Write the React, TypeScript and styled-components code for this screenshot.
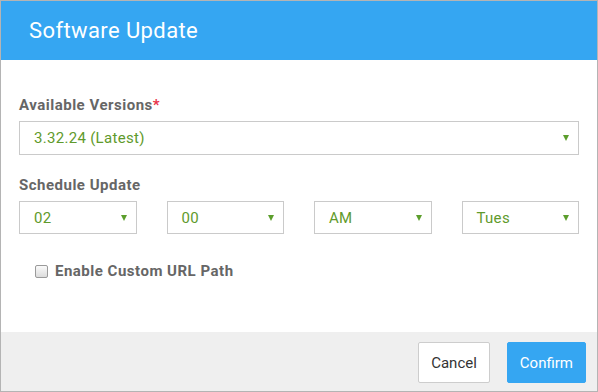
import styled, { createGlobalStyle } from "styled-components";

const GlobalStyle = createGlobalStyle`
  html, body {
    margin: 0;
    padding: 0;
    background: #fff;
  }
  body {
    font-family: Roboto, "Liberation Sans", Arial, sans-serif;
  }
`;

const Dialog = styled.div`
  width: 598px;
  height: 392px;
  box-sizing: border-box;
  border: 1px solid #b4b4b4;
  display: flex;
  flex-direction: column;
  background: #fff;
`;

const Header = styled.header`
  height: 59px;
  flex: none;
  background-color: #35a6f2;
  color: #fff;
  display: flex;
  align-items: center;
  padding-left: 28px;
  font-size: 22px;
  font-weight: 400;
  letter-spacing: 0.4px;
`;

const Body = styled.div`
  flex: 1;
  padding: 37px 18px 0 18px;
`;

const Label = styled.div`
  font-size: 15px;
  font-weight: 700;
  color: #666;
  line-height: 17px;
  margin-bottom: 7px;
  letter-spacing: 0.5px;
  .req {
    color: #e8344a;
  }
`;

const Field = styled.div`
  margin-bottom: 22px;
`;

const SelectBox = styled.div<{ $height?: number }>`
  height: ${({ $height }) => $height ?? 34}px;
  box-sizing: border-box;
  border: 1px solid #cacaca;
  display: flex;
  align-items: center;
  justify-content: space-between;
  padding: 0 9px 0 14px;
  font-size: 15px;
  color: #5f9a2c;
  letter-spacing: 0.3px;
`;

const Caret = styled.span`
  width: 0;
  height: 0;
  border-left: 3px solid transparent;
  border-right: 3px solid transparent;
  border-top: 6px solid #5c9e2c;
`;

const ScheduleRow = styled.div`
  display: grid;
  grid-template-columns: repeat(4, 1fr);
  column-gap: 30px;
`;

const CheckRow = styled.label`
  display: flex;
  align-items: center;
  gap: 7px;
  padding-left: 16px;
  margin-top: 28px;
  line-height: 18px;
  font-size: 15px;
  font-weight: 700;
  color: #666;
  letter-spacing: 0.5px;
`;

const Box = styled.span`
  width: 11px;
  height: 11px;
  border: 1px solid #9a9a9a;
  border-radius: 2px;
  background: linear-gradient(#fafafa, #dcdcdc);
`;

const Footer = styled.footer`
  height: 59px;
  flex: none;
  background: #efefef;
  display: flex;
  justify-content: flex-end;
  align-items: flex-start;
  gap: 17px;
  padding: 10px 11px 0 0;
  box-sizing: border-box;
`;

const Button = styled.button<{ $primary?: boolean }>`
  height: 41px;
  box-sizing: border-box;
  font-family: inherit;
  font-size: 15px;
  border-radius: 2px;
  cursor: pointer;
  padding: 0 12px;
  background: ${({ $primary }) => ($primary ? "#35a6f2" : "#fff")};
  color: ${({ $primary }) => ($primary ? "#fff" : "#333")};
  border: 1px solid ${({ $primary }) => ($primary ? "#35a6f2" : "#cdcdcd")};
`;

const schedule = ["02", "00", "AM", "Tues"];

export default function App() {
  return (
    <>
      <GlobalStyle />
      <Dialog>
        <Header>Software Update</Header>
        <Body>
          <Field>
            <Label>
              Available Versions<span className="req">*</span>
            </Label>
            <SelectBox>
              <span>3.32.24 (Latest)</span>
              <Caret />
            </SelectBox>
          </Field>
          <Label>Schedule Update</Label>
          <ScheduleRow>
            {schedule.map((v) => (
              <SelectBox key={v} $height={33}>
                <span>{v}</span>
                <Caret />
              </SelectBox>
            ))}
          </ScheduleRow>
          <CheckRow>
            <Box />
            Enable Custom URL Path
          </CheckRow>
        </Body>
        <Footer>
          <Button>Cancel</Button>
          <Button $primary>Confirm</Button>
        </Footer>
      </Dialog>
    </>
  );
}
